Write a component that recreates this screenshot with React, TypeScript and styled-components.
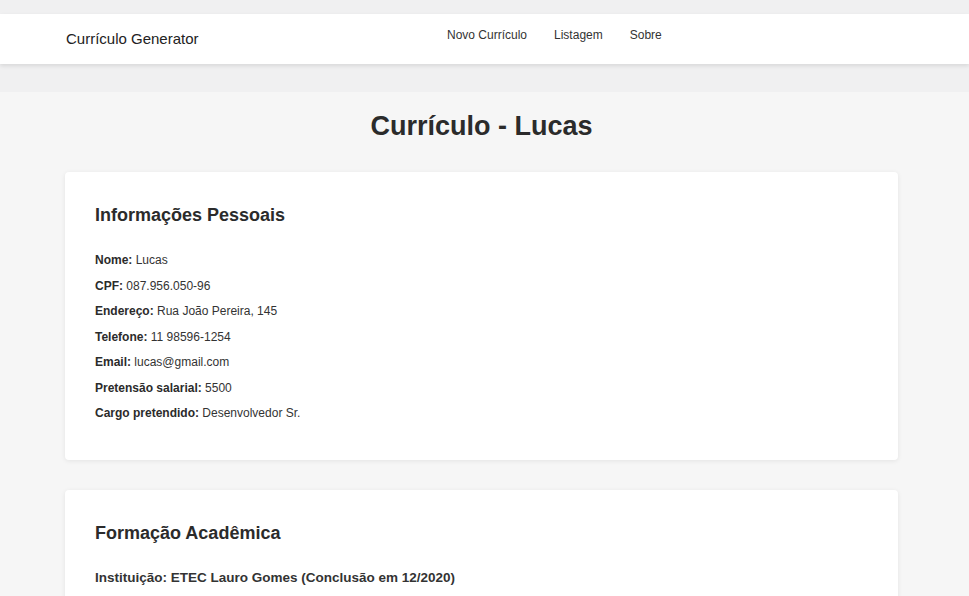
import React from "react";
import styled, { createGlobalStyle } from "styled-components";

const GlobalStyle = createGlobalStyle`
  html, body {
    margin: 0;
    padding: 0;
    background: #f0f0f1;
    font-family: "Liberation Sans", Arial, sans-serif;
    color: #333;
  }
  * { box-sizing: border-box; }
`;

const Page = styled.div`
  padding-top: 14px;
  min-height: 596px;
`;

const Header = styled.header`
  height: 50px;
  background: #fff;
  box-shadow: 0 2px 4px rgba(0, 0, 0, 0.1);
`;

const Container = styled.div`
  width: 833px;
  margin-left: 65px;
`;

const HeaderInner = styled(Container)`
  height: 100%;
  display: flex;
  align-items: center;
`;

const Brand = styled.div`
  flex: 0 0 382px;
  font-size: 15px;
  line-height: 18px;
  color: #222;
  padding-left: 1px;
`;

const Nav = styled.nav`
  align-self: flex-start;
  padding-top: 14px;
  display: flex;
  gap: 27px;
`;

const NavLink = styled.a`
  font-size: 12px;
  line-height: 14px;
  color: #333;
  text-decoration: none;
`;

const Main = styled.main`
  margin-top: 28px;
  background: #f6f6f6;
  padding: 19px 0 30px;
  min-height: 504px;
`;

const Title = styled.h1`
  margin: 0 0 30px;
  text-align: center;
  font-size: 27px;
  line-height: 31px;
  font-weight: bold;
  color: #2b2b2b;
`;

const Card = styled.section`
  background: #fff;
  border-radius: 4px;
  box-shadow: 0 1px 5px rgba(0, 0, 0, 0.08);
  padding: 33px 30px 28px;
  margin-bottom: 30px;
`;

const CardTitle = styled.h2<{ $gap?: number }>`
  margin: 0 0 ${(p) => p.$gap ?? 27}px;
  font-size: 18px;
  line-height: 21px;
  font-weight: bold;
  color: #2b2b2b;
`;

const Field = styled.p`
  margin: 0 0 11.5px;
  font-size: 12px;
  line-height: 14px;
  color: #333;
  b { color: #2b2b2b; }
`;

const Institution = styled.h3`
  margin: 0 0 12px;
  font-size: 13.5px;
  line-height: 16px;
  font-weight: bold;
  color: #333;
`;

const fields: [string, string][] = [
  ["Nome:", "Lucas"],
  ["CPF:", "087.956.050-96"],
  ["Endereço:", "Rua João Pereira, 145"],
  ["Telefone:", "11 98596-1254"],
  ["Email:", "lucas@gmail.com"],
  ["Pretensão salarial:", "5500"],
  ["Cargo pretendido:", "Desenvolvedor Sr."],
];

export default function App() {
  return (
    <>
      <GlobalStyle />
      <Page>
        <Header>
          <HeaderInner>
            <Brand>Currículo Generator</Brand>
            <Nav>
              <NavLink href="#">Novo Currículo</NavLink>
              <NavLink href="#">Listagem</NavLink>
              <NavLink href="#">Sobre</NavLink>
            </Nav>
          </HeaderInner>
        </Header>
        <Main>
          <Container>
            <Title>Currículo - Lucas</Title>
            <Card>
              <CardTitle>Informações Pessoais</CardTitle>
              {fields.map(([k, v]) => (
                <Field key={k}>
                  <b>{k}</b> {v}
                </Field>
              ))}
            </Card>
            <Card>
              <CardTitle $gap={26}>Formação Acadêmica</CardTitle>
              <Institution>Instituição: ETEC Lauro Gomes (Conclusão em 12/2020)</Institution>
            </Card>
          </Container>
        </Main>
      </Page>
    </>
  );
}
